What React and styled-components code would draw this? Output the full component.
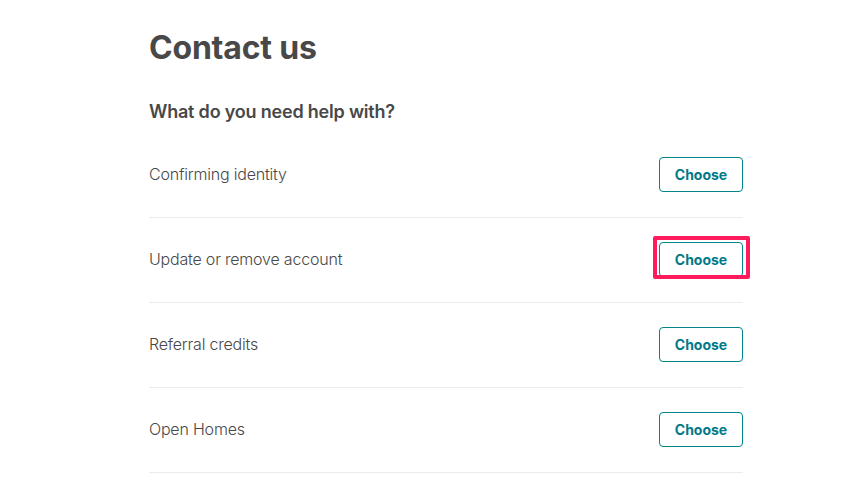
import React from "react";
import styled, { createGlobalStyle } from "styled-components";

const GlobalStyle = createGlobalStyle`
  body {
    margin: 0;
    background: #ffffff;
    font-family: Inter, "Noto Sans", "Liberation Sans", sans-serif;
    color: #484848;
  }
`;

const Page = styled.div`
  width: 594px;
  padding: 28px 0 0 149px;
`;

const Title = styled.h1`
  margin: 0;
  font-size: 32px;
  line-height: 40px;
  font-weight: 700;
  letter-spacing: -0.2px;
  color: #484848;
`;

const Subtitle = styled.h2`
  margin: 32px 0 9px;
  font-size: 18px;
  line-height: 24px;
  font-weight: 600;
  letter-spacing: -0.2px;
  color: #484848;
`;

const List = styled.ul`
  list-style: none;
  margin: 0;
  padding: 0;
`;

const Row = styled.li`
  display: flex;
  align-items: center;
  justify-content: space-between;
  height: 82px;
  padding-bottom: 2px;
  border-bottom: 1px solid #ebebeb;
`;

const Label = styled.span`
  font-size: 16px;
  font-weight: 300;
  letter-spacing: -0.2px;
  color: #484848;
`;

const Button = styled.button`
  position: relative;
  width: 84px;
  height: 35px;
  padding: 0;
  border: 1px solid #008489;
  border-radius: 4px;
  background: #ffffff;
  color: #007a87;
  font-family: inherit;
  font-size: 14px;
  font-weight: 700;
  cursor: pointer;

  &::after {
    content: "";
    display: ${(p) => (p.$highlighted ? "block" : "none")};
    position: absolute;
    top: -7px;
    left: -7px;
    right: -8px;
    bottom: -3px;
    border: 4px solid #ff1a5b;
    border-radius: 2px;
    pointer-events: none;
  }
`;

const topics = [
  { label: "Confirming identity" },
  { label: "Update or remove account", highlighted: true },
  { label: "Referral credits" },
  { label: "Open Homes" },
];

export default function App() {
  return (
    <>
      <GlobalStyle />
      <Page>
        <Title>Contact us</Title>
        <Subtitle>What do you need help with?</Subtitle>
        <List>
          {topics.map((t) => (
            <Row key={t.label}>
              <Label>{t.label}</Label>
              <Button $highlighted={t.highlighted}>Choose</Button>
            </Row>
          ))}
        </List>
      </Page>
    </>
  );
}
